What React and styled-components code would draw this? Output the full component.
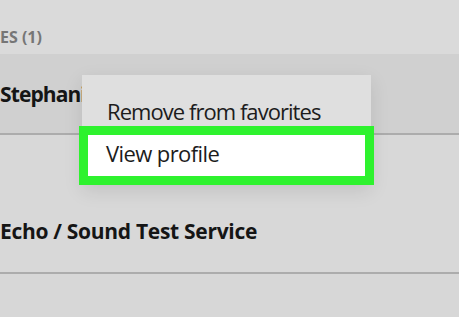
import React from "react";
import styled, { createGlobalStyle } from "styled-components";

const GlobalStyle = createGlobalStyle`
  body {
    margin: 0;
    background: #d8d8d8;
    font-family: "Open Sans", "Noto Sans", sans-serif;
  }
`;

export default function App() {
  return (
    <>
      <GlobalStyle />
      <Page>
        <SectionHeader>ES (1)</SectionHeader>
        <ContactRow active height={79}>
          <ContactName top={30} tight>Stephanie Jones</ContactName>
          <ContextMenu>
            <MenuItem>Remove from favorites</MenuItem>
            <HighlightedItem>View profile</HighlightedItem>
          </ContextMenu>
        </ContactRow>
        <ContactRow height={137}>
          <ContactName top={86}>Echo / Sound Test Service</ContactName>
        </ContactRow>
      </Page>
    </>
  );
}

const Page = styled.div`
  width: 459px;
  height: 317px;
  overflow: hidden;
  display: flex;
  flex-direction: column;
  background: #d7d7d7;
`;

const SectionHeader = styled.div`
  height: 54px;
  box-sizing: border-box;
  padding-top: 29px;
  font-size: 16px;
  line-height: 16px;
  font-weight: 700;
  color: #767676;
  background: #dadada;
`;

const ContactRow = styled.div`
  position: relative;
  height: ${(p) => p.height}px;
  flex-shrink: 0;
  background: ${(p) => (p.active ? "#d0d0d0" : "#d8d8d8")};
  border-bottom: 2px solid #acacac;
`;

const ContactName = styled.div`
  padding-top: ${(p) => p.top}px;
  font-size: 21px;
  line-height: 21px;
  font-weight: 700;
  color: #151515;
  white-space: nowrap;
  letter-spacing: ${(p) => (p.tight ? "-0.9px" : "-0.3px")};
`;

const ContextMenu = styled.div`
  position: absolute;
  left: 82px;
  top: 21px;
  width: 289px;
  display: flex;
  flex-direction: column;
  background: #dfdfdf;
  box-shadow: 0 6px 18px rgba(0, 0, 0, 0.1);
  z-index: 2;
`;

const MenuItem = styled.div`
  height: 51px;
  box-sizing: border-box;
  padding: 25px 0 0 25px;
  font-size: 22px;
  line-height: 22px;
  color: #1c1c1c;
  letter-spacing: -0.95px;
  white-space: nowrap;
`;

const HighlightedItem = styled.div`
  height: 59px;
  box-sizing: border-box;
  margin: 0 -3px;
  padding: 7px 0 0 18px;
  border: 9px solid #2ef22e;
  background: #ffffff;
  font-size: 22px;
  line-height: 22px;
  color: #1c1c1c;
  letter-spacing: -0.6px;
  white-space: nowrap;
`;
